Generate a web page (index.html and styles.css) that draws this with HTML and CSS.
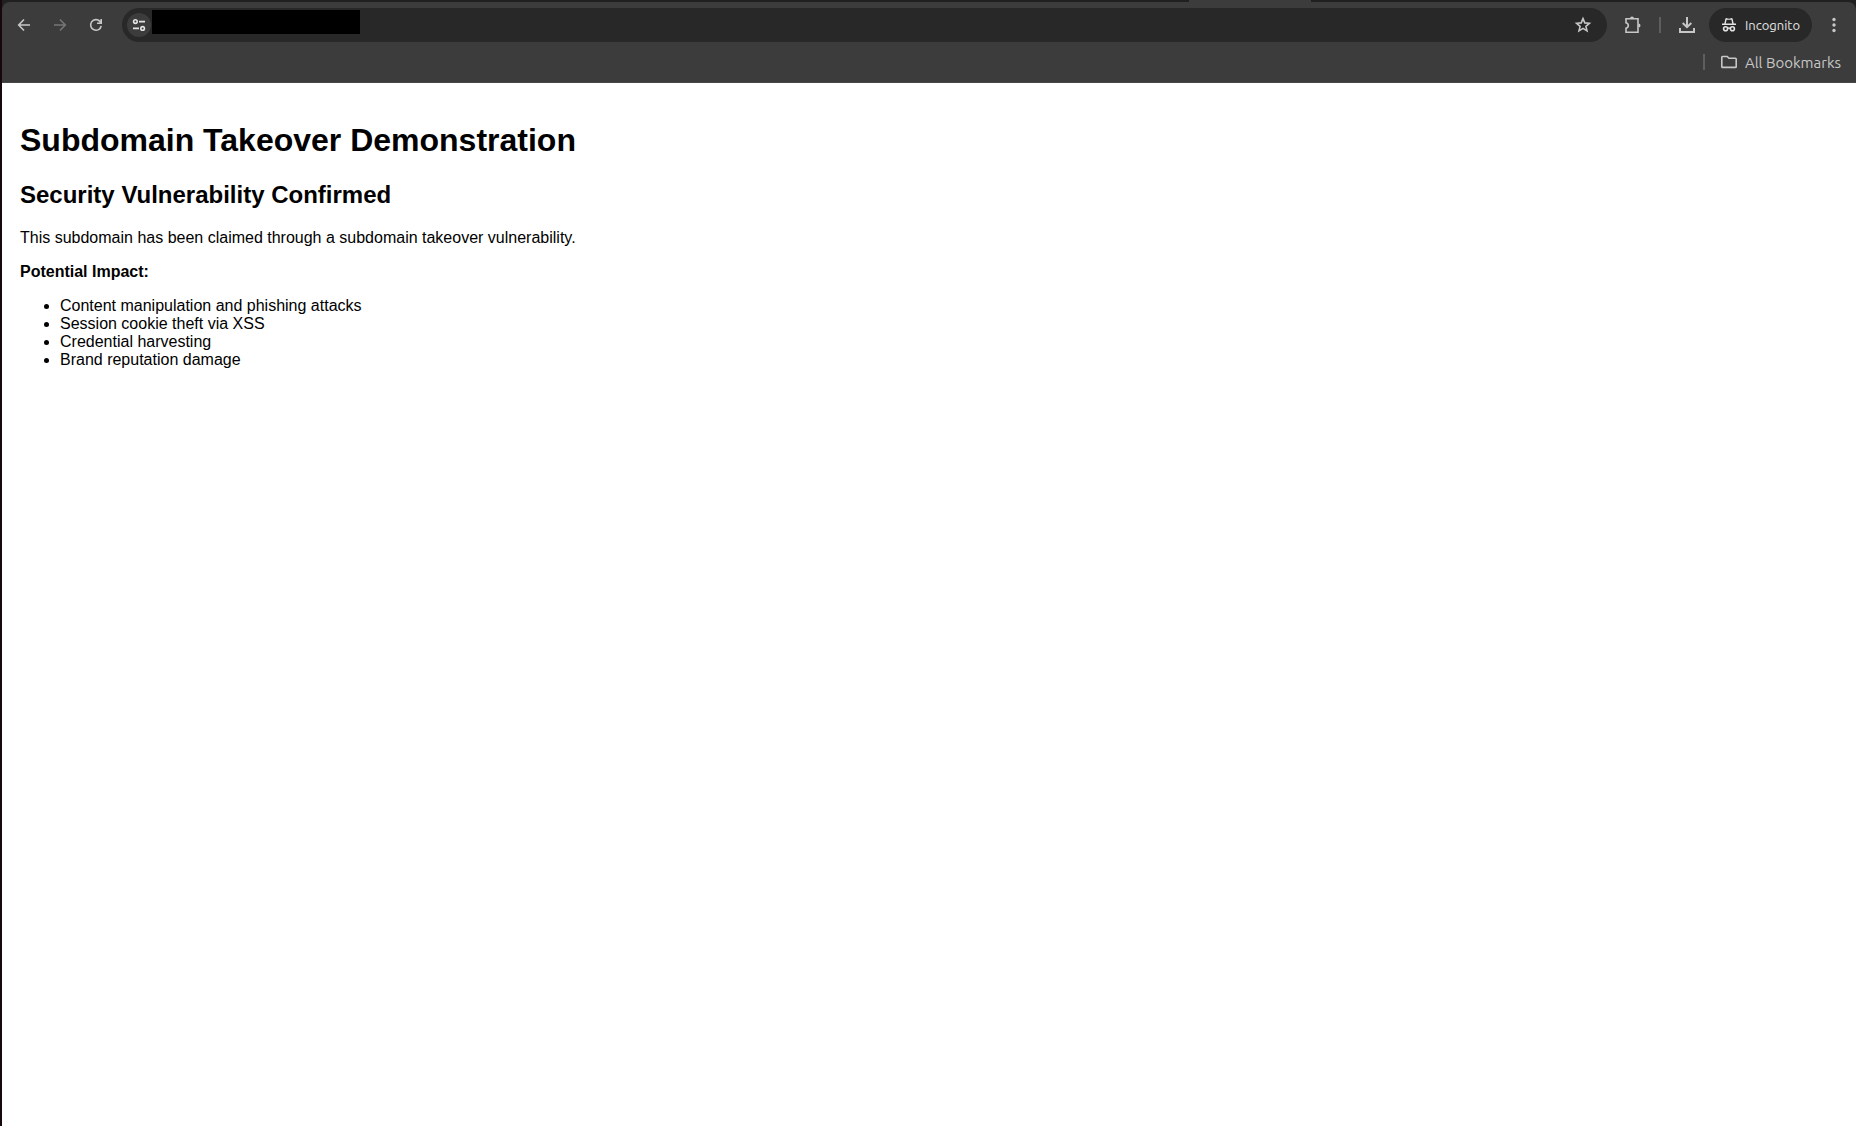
FILE: index.html
```html
<!DOCTYPE html>
<html lang="en">
<head>
  <meta charset="UTF-8" />
  <meta name="viewport" content="width=device-width, initial-scale=1" />
  <title>Subdomain Takeover Demonstration</title>
  <link rel="stylesheet" href="styles.css">
</head>
<body>

<div class="tab-strip"><div class="active-tab"></div></div>

<header class="chrome">
  <div class="toolbar">
    <button class="icon-btn" aria-label="Back">
      <svg width="16" height="16" viewBox="0 0 16 16"><path d="M8 2.5 2.7 8 8 13.5M3 8h11" /></svg>
    </button>
    <button class="icon-btn" aria-label="Forward" disabled>
      <svg width="16" height="16" viewBox="0 0 16 16"><path d="M8 2.5 13.3 8 8 13.5M13 8H2" /></svg>
    </button>
    <button class="icon-btn" aria-label="Reload">
      <svg width="16" height="16" viewBox="0 0 16 16"><path d="M13.2 8.8A5.3 5.3 0 1 1 11.9 4.4L13 5.6M13.2 2v4.2H9" /></svg>
    </button>

    <div class="omnibox">
      <button class="site-info" aria-label="Site information">
        <svg width="14" height="14" viewBox="0 0 14 14">
          <circle cx="3.4" cy="3.6" r="1.8" /><path d="M7 3.6h6M1 10.4h6" /><circle cx="10.6" cy="10.4" r="1.8" />
        </svg>
      </button>
      <div class="mask"></div>
      <input class="address" type="text" aria-label="Address">
      <button class="star" aria-label="Bookmark">
        <svg width="18" height="18" viewBox="0 0 18 18"><path d="m9 2.600 1.800 4.300 4.600.4-3.500 3.100 1.100 4.500L9 12.400l-4 2.500 1.100-4.500-3.500-3.100 4.600-.4z" /></svg>
      </button>
    </div>

    <button class="icon-btn" aria-label="Extensions">
      <svg width="18" height="18" viewBox="0 0 18 18">
        <path d="M2 2.800h12v13.400H2v-4q2.300-.6 2.300-2.700T2 6.800z" />
        <path class="solid" d="M6 2.500a2 2 0 0 1 4 0zM14.500 7.500a2 2 0 0 1 0 4z" />
      </svg>
    </button>
    <span class="divider"></span>
    <button class="icon-btn" aria-label="Downloads">
      <svg class="bold" width="18" height="18" viewBox="0 0 18 18"><path d="M9 1v10M4.700 7 9 11.200 13.300 7M2 12v4h14v-4" /></svg>
    </button>
    <button class="incognito">
      <svg width="16" height="16" viewBox="0 0 16 16">
        <path class="solid" d="M4.300 2q.3-1.200 1.500-.8l2.200.5 2.200-.5q1.200-.4 1.500.8L12.700 6.500H15V8H1V6.500h2.300z" />
        <path class="crown" d="M5.600 2.800h4.800l.8 3.700H4.800z" />
        <circle cx="4.600" cy="11.800" r="2" /><circle cx="11.400" cy="11.800" r="2" /><path d="M6.500 11.400q1.500-.8 3 0" />
      </svg>
      Incognito
    </button>
    <button class="icon-btn" aria-label="Menu">
      <svg width="16" height="16" viewBox="0 0 16 16">
        <g class="solid"><circle cx="8" cy="2.500" r="1.700" /><circle cx="8" cy="8" r="1.700" /><circle cx="8" cy="13.500" r="1.700" /></g>
      </svg>
    </button>
  </div>

  <div class="bookmarks">
    <span class="divider"></span>
    <button class="all-bookmarks">
      <svg width="16" height="16" viewBox="0 0 16 16"><path d="M.8 12.700V3.200q0-.7.7-.7h4.700L8 4.300h6.500q.7 0 .7.700v7.700q0 .7-.7.700h-13q-.7 0-.7-.7z" /></svg>
      All Bookmarks
    </button>
  </div>
</header>

<main class="page">
  <h1>Subdomain Takeover Demonstration</h1>
  <h2>Security Vulnerability Confirmed</h2>
  <p>This subdomain has been claimed through a subdomain takeover vulnerability.</p>
  <p><strong>Potential Impact:</strong></p>
  <ul>
    <li>Content manipulation and phishing attacks</li>
    <li>Session cookie theft via XSS</li>
    <li>Credential harvesting</li>
    <li>Brand reputation damage</li>
  </ul>
</main>

</body>
</html>
```
FILE: styles.css
```css
html {
  background: #202020;
}

* {
  box-sizing: border-box;
}

body {
  margin: 0;
  min-height: 100vh;
  display: flex;
  flex-direction: column;
  border-left: 2px solid #16080f;
  font-family: "Liberation Sans", Arial, sans-serif;
}

/* browser chrome */
.tab-strip {
  height: 2px;
  padding-left: 64%;
  background: #202020;
}

.active-tab {
  width: 122px;
  height: 2px;
  background: #3c3c3c;
}

.chrome {
  background: #3c3c3c;
  border-bottom: 1px solid #474747;
  border-radius: 8px 8px 0 0;
  font-family: Ubuntu, "Noto Sans", sans-serif;
}

.toolbar {
  display: flex;
  align-items: center;
  padding: 6px 4px 0;
}

button {
  display: flex;
  align-items: center;
  justify-content: center;
  padding: 0;
  border: none;
  background: none;
  color: #c7c7c7;
  font-family: inherit;
}

button:disabled {
  color: #757575;
}

svg {
  flex: none;
  fill: none;
  stroke: currentColor;
  stroke-width: 1.6;
}

.bold {
  stroke-width: 2;
}

.solid {
  fill: currentColor;
  stroke: none;
}

.crown {
  fill: #282828;
  stroke: none;
}

.icon-btn {
  flex: none;
  width: 36px;
  height: 34px;
}

.omnibox {
  display: flex;
  align-items: center;
  flex: 1;
  height: 34px;
  margin: 0 8px;
  padding: 0 15px 0 5px;
  border-radius: 17px;
  background: #282828;
}

.site-info {
  width: 24px;
  height: 24px;
  border-radius: 50%;
  background: #3c3c3c;
  color: #e3e3e3;
}

.mask {
  align-self: flex-start;
  width: 208px;
  height: 24px;
  margin: 2px 0 0 1px;
  background: #000;
}

.address {
  flex: 1;
  min-width: 0;
  border: none;
  outline: none;
  background: transparent;
  color: #e3e3e3;
}

.divider {
  width: 2px;
  height: 16px;
  margin: 0 8px;
  background: #5e5e5e;
}

.incognito {
  gap: 8px;
  height: 34px;
  margin: 0 4px;
  padding: 0 12px;
  border-radius: 17px;
  background: #282828;
  color: #e3e3e3;
  font-size: 13px;
}

.bookmarks {
  display: flex;
  align-items: center;
  justify-content: flex-end;
  height: 40px;
  padding-right: 15px;
}

.all-bookmarks {
  gap: 8px;
  margin-left: 8px;
  font-size: 15px;
}

/* page content */
.page {
  flex: 1;
  padding: 0 18px;
  background: #fff;
  color: #000;
}

.page h1 {
  margin: 39px 0 22px;
  font-size: 32px;
}

.page h2 {
  margin: 20px 0;
  font-size: 24px;
}

.page p,
.page ul {
  margin: 16px 0;
  line-height: 18px;
}
```
